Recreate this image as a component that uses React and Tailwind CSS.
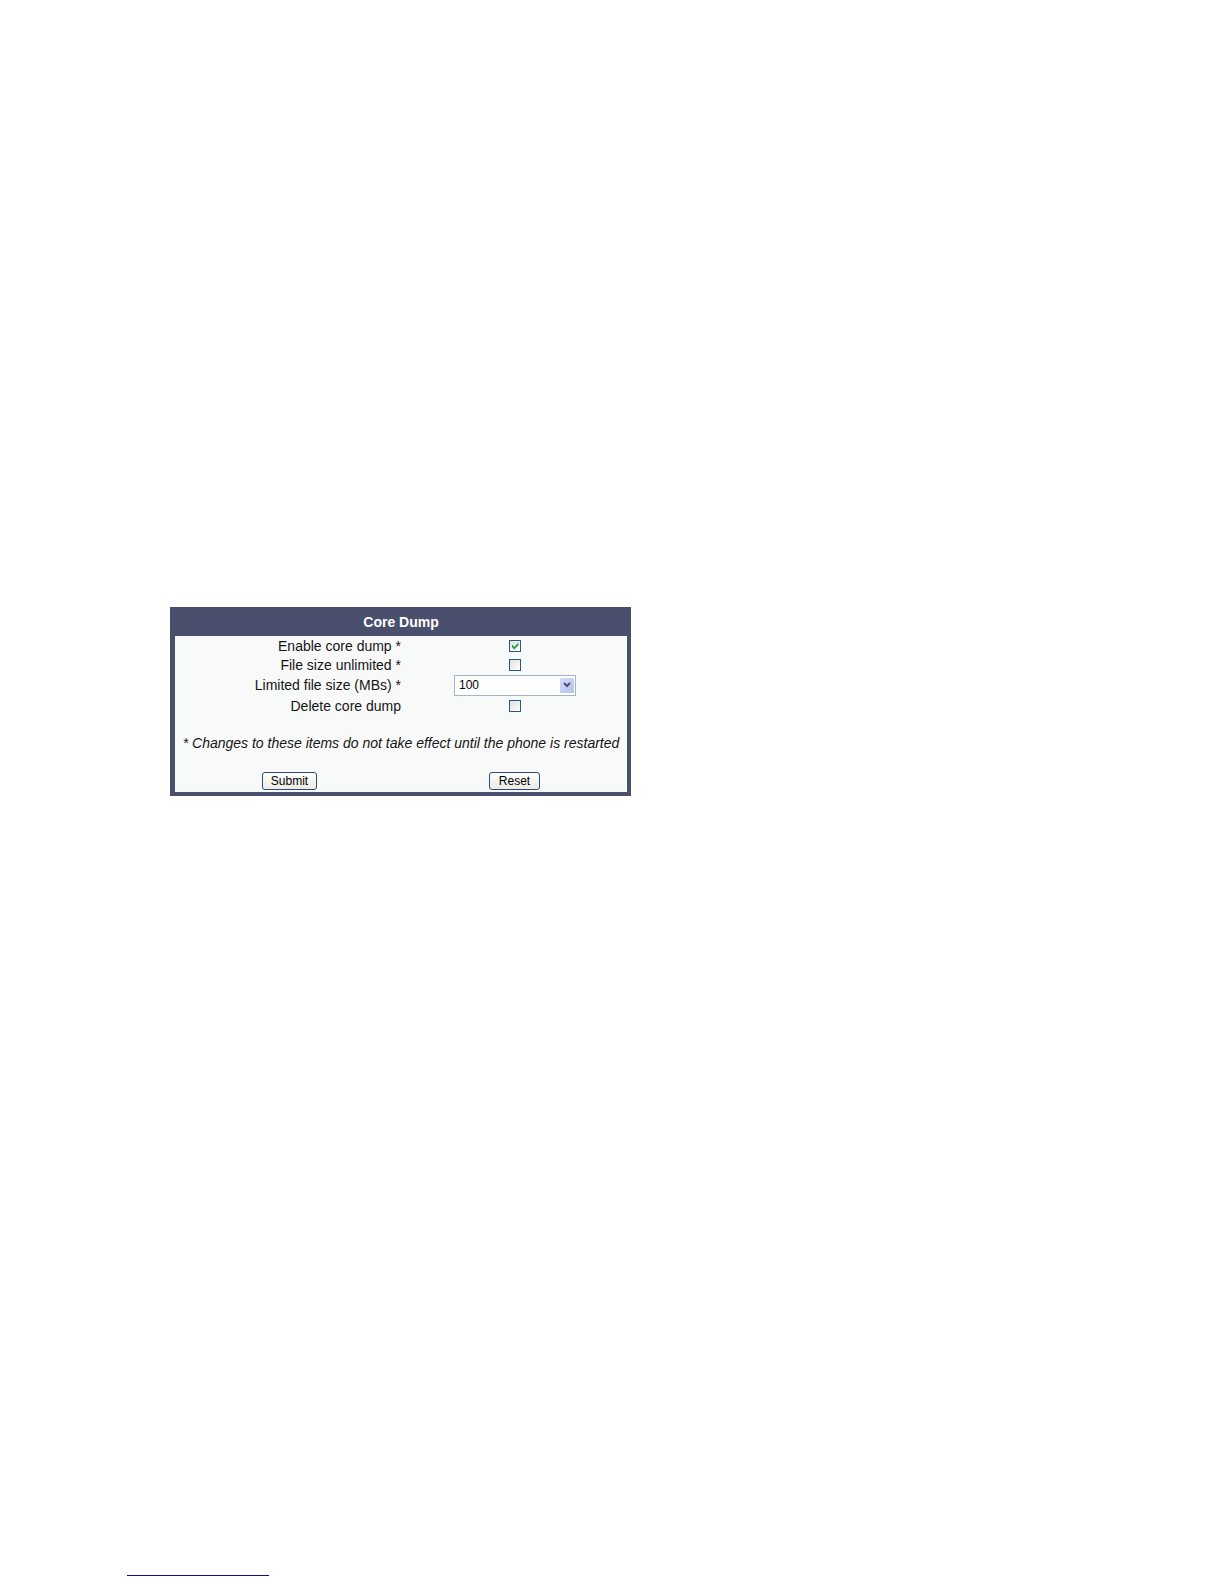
import { useState } from "react";

function Check({ id, defaultChecked = false }) {
  const [on, setOn] = useState(defaultChecked);
  return (
    <span className="relative flex h-3 w-3">
      <input
        id={id}
        type="checkbox"
        checked={on}
        onChange={(e) => setOn(e.target.checked)}
        className="h-3 w-3 appearance-none border border-[#2c5580] bg-linear-to-br from-[#dfdfda] to-white"
      />
      {on && (
        <svg viewBox="0 0 12 12" className="pointer-events-none absolute inset-0 h-3 w-3" aria-hidden="true">
          <path d="M3 4.5 L5.3 6.8 L9.5 2.6 V5.3 L5.3 9.4 L3 7.2 Z" fill="#2fa03a" />
        </svg>
      )}
    </span>
  );
}

function Row({ id, label, height, children }) {
  return (
    <tr className={height}>
      <td className="w-1/2 p-0 text-right">
        <label htmlFor={id}>{label}</label>
      </td>
      <td className="w-1/2 p-0 pl-[2px]">
        <div className="flex items-center justify-center">{children}</div>
      </td>
    </tr>
  );
}

const buttonClass =
  "h-[18px] rounded-[3px] border border-[#2c4a7c] bg-linear-to-b from-white to-[#ecebe0] text-xs leading-4 text-black";

export default function App() {
  return (
    <div className="flex min-h-screen flex-col justify-between bg-white pt-[607px] font-['Liberation_Sans',Arial,sans-serif]">
      <main className="px-[170px]">
        <form
          onSubmit={(e) => e.preventDefault()}
          className="w-full max-w-[461px] border-4 border-t-0 border-l-5 border-[#4b4f6e] bg-[#f8f9f9]"
        >
          <h1 className="flex h-[29px] items-center justify-center bg-[#4b4f6e] pt-px text-sm font-bold text-white">
            Core Dump
          </h1>
          <table className="w-full border-collapse text-sm leading-4 text-[#151515]">
            <tbody>
              <Row id="enable" label="Enable core dump *" height="h-5">
                <Check id="enable" defaultChecked />
              </Row>
              <Row id="unlimited" label="File size unlimited *" height="h-[18px]">
                <Check id="unlimited" />
              </Row>
              <Row id="limit" label="Limited file size (MBs) *" height="h-[22px]">
                <span className="relative flex w-[122px]">
                  <select
                    id="limit"
                    defaultValue="100"
                    className="h-[21px] w-full appearance-none border border-[#a3b6c8] bg-white pl-1 text-xs text-black"
                  >
                    <option>100</option>
                  </select>
                  <span className="pointer-events-none absolute top-[3px] right-[2px] flex h-[15px] w-[14px] items-center justify-center rounded-[1px] bg-linear-to-br from-[#d3dcfa] to-[#b6c1ea]">
                    <svg viewBox="0 0 8 6" className="h-[6px] w-2" fill="none" aria-hidden="true">
                      <path d="M1 1 L4 4 L7 1" stroke="#44527d" strokeWidth="2" />
                    </svg>
                  </span>
                </span>
              </Row>
              <Row id="delete" label="Delete core dump" height="h-5">
                <Check id="delete" />
              </Row>
            </tbody>
          </table>
          <p className="mt-[19px] text-center text-sm leading-4 whitespace-nowrap text-[#151515] italic">
            * Changes to these items do not take effect until the phone is restarted
          </p>
          <div className="mt-[21px] grid grid-cols-2 justify-items-center pb-[2px] pl-[2px]">
            <button type="submit" className={`${buttonClass} w-[55px]`}>
              Submit
            </button>
            <button type="reset" className={`${buttonClass} w-[51px]`}>
              Reset
            </button>
          </div>
        </form>
      </main>
      <footer className="px-[127px] pb-2">
        <hr className="w-full max-w-[142px] border-t border-[#0c0c94]" />
      </footer>
    </div>
  );
}
